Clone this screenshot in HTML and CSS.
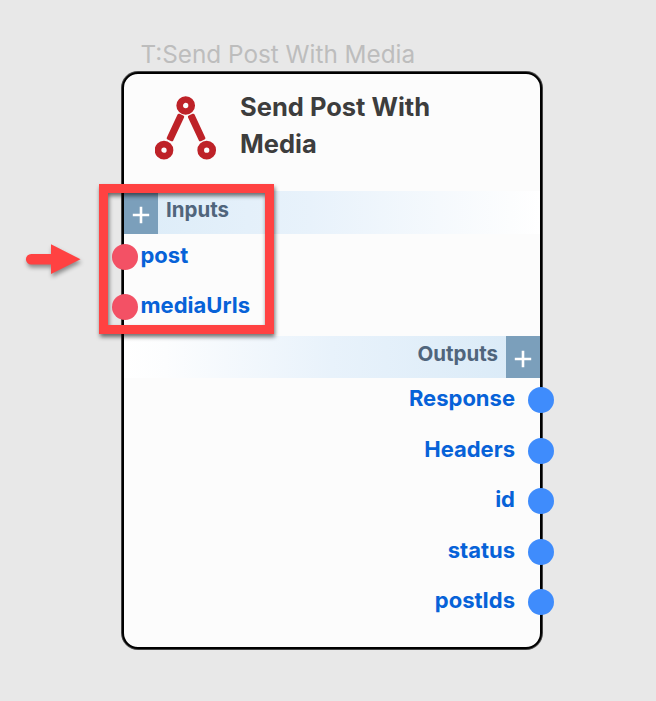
FILE: index.html
```html
<!DOCTYPE html>
<html lang="en">
<head>
<meta charset="utf-8">
<title>Send Post With Media</title>
<link rel="stylesheet" href="styles.css">
</head>
<body>
<main class="canvas">
  <div class="node-label">T:Send Post With Media</div>
  <section class="node">
    <header class="node-header">
      <svg class="node-icon" viewBox="0 0 62 64" fill="none" stroke="#be2228">
        <g stroke-width="6.7">
          <circle cx="30.7" cy="9.5" r="6"/>
          <circle cx="9" cy="54.2" r="6"/>
          <circle cx="51.7" cy="54.2" r="6"/>
        </g>
        <g fill="#be2228" stroke-width="3" stroke-linejoin="round">
          <path d="M23.9 19.2L27.7 20.9L16.9 43.8L13.2 42.1Z"/>
          <path d="M38.2 19.2L34.4 20.9L45.2 43.8L48.9 42.1Z"/>
        </g>
      </svg>
      <h1 class="node-title">Send Post With Media</h1>
    </header>
    <div class="bar bar-in">
      <button class="add" aria-label="Add input"><svg viewBox="0 0 18 18"><path d="M9 .8V17.2M.8 9H17.2"/></svg></button>
      <span class="bar-name">Inputs</span>
    </div>
    <div class="ports ports-in">
      <div class="port"><i class="dot"></i><span class="port-name">post</span></div>
      <div class="port"><i class="dot"></i><span class="port-name">mediaUrls</span></div>
    </div>
    <div class="bar bar-out">
      <span class="bar-name">Outputs</span>
      <button class="add" aria-label="Add output"><svg viewBox="0 0 18 18"><path d="M9 .8V17.2M.8 9H17.2"/></svg></button>
    </div>
    <div class="ports ports-out">
      <div class="port"><span class="port-name">Response</span><i class="dot"></i></div>
      <div class="port"><span class="port-name">Headers</span><i class="dot"></i></div>
      <div class="port"><span class="port-name">id</span><i class="dot"></i></div>
      <div class="port"><span class="port-name">status</span><i class="dot"></i></div>
      <div class="port"><span class="port-name">postIds</span><i class="dot"></i></div>
    </div>
  </section>
  <div class="highlight"></div>
  <svg class="arrow" viewBox="0 0 56 32"><path d="M5.2 9.9H25V0.2L54.5 15.2L25 30V20.5H5.2A5.3 5.3 0 0 1 5.2 9.9Z" fill="#ff4242"/></svg>
</main>
</body>
</html>
```
FILE: styles.css
```css
* { box-sizing: border-box; }

body {
  margin: 0;
  background: #e8e8e8;
  font-family: Inter, "Liberation Sans", sans-serif;
}

.canvas {
  position: relative;
  width: 656px;
  height: 701px;
  padding: 39px 114px 0 122px;
  overflow: hidden;
}

.node-label {
  height: 33px;
  padding-left: 18.5px;
  font-size: 24.3px;
  line-height: 30px;
  color: #bdbdbd;
  white-space: nowrap;
}

.node {
  width: 420px;
  height: 577px;
  border: 2px solid #000;
  border-radius: 16px;
  background: #fcfcfc;
  box-shadow: 0 0 0 1px rgba(0, 0, 0, .7);
}

.node-header {
  display: flex;
  height: 117px;
  padding: 14px 55px 0 31px;
}

.node-icon {
  width: 62px;
  height: 64px;
  margin-top: 8px;
  flex: none;
}

.node-title {
  margin: 0 0 0 23px;
  font-size: 25.5px;
  line-height: 37px;
  font-weight: 700;
  color: #3d3d3d;
}

.bar {
  display: flex;
  height: 43px;
}

.bar-in { background: linear-gradient(to right, #dcecf8, #e8f2fb 45%, #fcfdfe 93%, #fff); }
.bar-out { height: 42px; justify-content: flex-end; background: linear-gradient(to left, #d9eaf7, #e8f2fb 50%, #fcfdfe 90%, #fff); }

.bar-name {
  padding: 0 8px;
  font-size: 20.5px;
  line-height: 38px;
  font-weight: 700;
  color: #50657c;
}

.bar-out .bar-name { line-height: 36px; }

.add {
  display: flex;
  width: 34px;
  padding: 5px 0 0;
  align-items: center;
  justify-content: center;
  border: 0;
  background: #7b9fbb;
}

.bar-in .add { padding-right: 1px; }
.bar-out .add { padding-top: 3px; }

.add svg {
  width: 18px;
  height: 18px;
  stroke: #fff;
  stroke-width: 2.6;
}

.ports-in { height: 102px; }

.port {
  display: flex;
  height: 50.5px;
}

.port-name {
  font-size: 22px;
  line-height: 42px;
  font-weight: 700;
  color: #0762d8;
}

.dot {
  width: 26px;
  height: 26px;
  margin-top: 9.5px;
  flex: none;
  border-radius: 50%;
}

.ports-in .port { height: 50px; }
.ports-in .dot { margin-left: -12px; margin-right: 2.5px; background: #f35165; }
.ports-out { margin-top: -1px; }
.ports-out .port { justify-content: flex-end; }
.ports-out .dot { margin-top: 10px; margin-left: 12.5px; margin-right: -13.5px; background: #3f8cfc; }

.highlight {
  position: absolute;
  left: 99px;
  top: 184px;
  width: 175px;
  height: 150px;
  border: 9px solid #ff4242;
  filter: drop-shadow(1px 3px 2px rgba(0, 0, 0, .55));
}

.arrow {
  position: absolute;
  left: 26px;
  top: 244px;
  width: 56px;
  height: 32px;
  overflow: visible;
  filter: drop-shadow(1px 3px 2px rgba(0, 0, 0, .4));
}
```
